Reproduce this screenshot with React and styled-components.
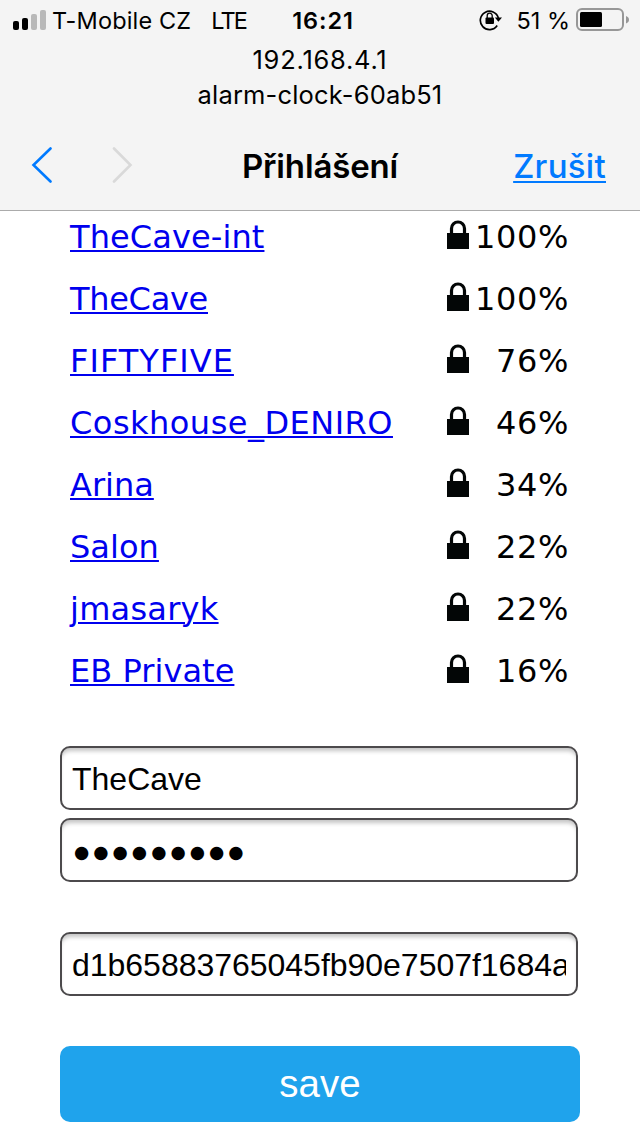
import React from 'react';
import styled, { createGlobalStyle } from 'styled-components';

const GlobalStyle = createGlobalStyle`
  *, *::before, *::after { box-sizing: border-box; }
  body { margin: 0; background: #fff; color: #000; }
`;

const Screen = styled.div`
  width: 640px;
  height: 1136px;
  overflow: hidden;
  background: #fff;
`;

const Header = styled.header`
  height: 211px;
  background: #f4f4f4;
  border-bottom: 1px solid #ababab;
  font-family: Inter, sans-serif;
`;

const StatusBar = styled.div`
  height: 42px;
  display: grid;
  grid-template-columns: 1fr auto 1fr;
  align-items: center;
  padding: 0 10px 0 13px;
  font-size: 23.5px;
  line-height: 40px;
  white-space: pre;
`;

const StatusGroup = styled.div`
  display: flex;
  align-items: center;
  justify-content: ${(p) => p.$end ? 'flex-end' : 'flex-start'};

  svg { margin-bottom: 2px; }
`;

const Text = styled.span`
  letter-spacing: ${(p) => p.$spacing || 0}px;
  margin-left: ${(p) => p.$left || 0}px;
`;

const Clock = styled.time`
  padding-left: 3px;
  font-weight: 600;
  letter-spacing: 0.9px;
`;

const Network = styled.div`
  text-align: center;
  font-size: 25.5px;
  line-height: 35px;
  letter-spacing: ${(p) => p.$spacing}px;
`;

const NavBar = styled.nav`
  height: 98px;
  display: grid;
  grid-template-columns: 1fr auto 1fr;
  align-items: center;
  padding: 8px 34px 0 30px;
`;

const Arrows = styled.div`
  display: flex;
  gap: 56px;
`;

const Title = styled.h1`
  margin: 0;
  padding: 2px 0 0 4px;
  font-size: 33px;
  font-weight: 600;
  line-height: 40px;
  letter-spacing: -0.15px;
`;

const Cancel = styled.a`
  justify-self: end;
  padding-top: 2px;
  font-size: 33px;
  font-weight: 500;
  line-height: 40px;
  letter-spacing: 0.3px;
  color: #007aff;
  text-decoration: underline;
  text-decoration-thickness: 2px;
  text-underline-offset: 3px;
`;

const List = styled.ul`
  display: flex;
  flex-direction: column;
  gap: 10px;
  margin: 0;
  padding: 0 71px 0 70px;
  list-style: none;
  font-family: Verdana, "DejaVu Sans", sans-serif;
  font-size: 32px;
`;

const Row = styled.li`
  display: flex;
  align-items: center;
  height: 52px;
  line-height: 52px;
`;

const Ssid = styled.a`
  color: #0000ee;
  letter-spacing: ${(p) => p.$spacing}px;
  text-decoration: underline;
  text-decoration-thickness: 2px;
  text-underline-offset: 2px;
`;

const Signal = styled.div`
  margin-left: auto;
  width: 123px;
  display: flex;
  align-items: center;
  justify-content: space-between;
  letter-spacing: 0.6px;

  svg { margin-bottom: 4px; }
`;

const Form = styled.form`
  display: flex;
  flex-direction: column;
  padding: 49px 60px 0;
`;

const Field = styled.div`
  width: 518px;
  height: 64px;
  margin-bottom: ${(p) => p.$after}px;
  padding: 0 10px;
  border: 2px solid #4c4a4c;
  border-radius: 10px;
  box-shadow: inset 0 5px 4px -2px #c4c4c4;
  font-family: "Liberation Sans", Arial, sans-serif;
  font-size: 32px;
  line-height: 62px;
`;

const Value = styled.div`
  overflow: hidden;
  white-space: nowrap;
  letter-spacing: ${(p) => p.$spacing || 0}px;
`;

const Dots = styled(Value)`
  padding: 1px 0 0 2px;
  font-family: "DejaVu Sans", sans-serif;
  font-size: 17.5px;
`;

const Save = styled.button`
  width: 520px;
  height: 76px;
  padding: 0;
  border: 0;
  border-radius: 10px;
  background: #1fa3ec;
  color: #fff;
  font: 38.4px/76px "Liberation Sans", Arial, sans-serif;
  letter-spacing: 0.1px;
`;

const networks = [
  { name: 'TheCave-int', quality: '100%', spacing: 0.1 },
  { name: 'TheCave', quality: '100%', spacing: -0.3 },
  { name: 'FIFTYFIVE', quality: '76%', spacing: 1.02 },
  { name: 'Coskhouse_DENIRO', quality: '46%', spacing: 0.48 },
  { name: 'Arina', quality: '34%', spacing: 0 },
  { name: 'Salon', quality: '22%', spacing: 0.05 },
  { name: 'jmasaryk', quality: '22%', spacing: 0.25 },
  { name: 'EB Private', quality: '16%', spacing: 0.05 },
];

const SignalBars = () => (
  <svg width="34" height="20" viewBox="0 0 34 20">
    <rect x="0" y="11" width="6" height="9" rx="2" />
    <rect x="9" y="8" width="6" height="12" rx="2" />
    <rect x="18" y="4" width="6" height="16" rx="2" fill="#b9b9b9" />
    <rect x="27" y="0" width="6" height="20" rx="2" fill="#b9b9b9" />
  </svg>
);

const RotationLock = () => (
  <svg width="24" height="22" viewBox="0 0 24 22">
    <path d="M18.200 16.500A9.200 9.200 0 1 1 19.400 9" fill="none" stroke="#000" strokeWidth="1.700" />
    <path d="M15.800 8.500h7.200l-3.600 4.200z" />
    <rect x="6.500" y="8.500" width="8.500" height="6.500" rx="1" />
    <path d="M8.200 9V6.700a2.500 2.500 0 0 1 5 0V9" fill="none" stroke="#000" strokeWidth="1.300" />
  </svg>
);

const Battery = () => (
  <svg width="54" height="24" viewBox="0 0 54 24">
    <rect x="1" y="1" width="46" height="21" rx="5" fill="none" stroke="#979797" strokeWidth="2" />
    <rect x="4" y="4" width="22" height="15" rx="1.500" />
    <path d="M50 8c2 .8 3 2 3 3.700s-1 2.900-3 3.700z" fill="#979797" />
  </svg>
);

const Chevron = ({ forward }) => (
  <svg width="24" height="36" viewBox="0 0 24 36">
    <path
      d={forward ? 'M4 1.500L20.500 18 4 34.500' : 'M20.500 1.500L3.500 18l17 16.500'}
      fill="none"
      stroke={forward ? '#d9d9d9' : '#007aff'}
      strokeWidth="2.600"
      strokeLinecap="round"
      strokeLinejoin="miter"
    />
  </svg>
);

const Padlock = () => (
  <svg width="24" height="30" viewBox="0 0 24 30">
    <path d="M5.500 14V8.500a6.500 6.500 0 0 1 13 0V14" fill="none" stroke="#030606" strokeWidth="3.200" />
    <rect x="1" y="13" width="22" height="16" fill="#030606" />
  </svg>
);

export default function App() {
  return (
    <Screen>
      <GlobalStyle />
      <Header>
        <StatusBar>
          <StatusGroup>
            <SignalBars />
            <Text $left={5} $spacing={0.15}>T-Mobile CZ</Text>
            <Text $left={20} $spacing={-1.8}>LTE</Text>
          </StatusGroup>
          <Clock>16:21</Clock>
          <StatusGroup $end>
            <RotationLock />
            <Text $left={13}>51 %</Text>
            <Text $left={6} />
            <Battery />
          </StatusGroup>
        </StatusBar>
        <Network $spacing={0.75}>192.168.4.1</Network>
        <Network $spacing={0.17}>alarm-clock-60ab51</Network>
        <NavBar>
          <Arrows>
            <Chevron />
            <Chevron forward />
          </Arrows>
          <Title>Přihlášení</Title>
          <Cancel>Zrušit</Cancel>
        </NavBar>
      </Header>
      <List>
        {networks.map((n) => (
          <Row key={n.name}>
            <Ssid $spacing={n.spacing}>{n.name}</Ssid>
            <Signal>
              <Padlock />
              <span>{n.quality}</span>
            </Signal>
          </Row>
        ))}
      </List>
      <Form>
        <Field $after={8}><Value>TheCave</Value></Field>
        <Field $after={50}><Dots $spacing={4.02}>●●●●●●●●●</Dots></Field>
        <Field $after={50}><Value $spacing={-0.02}>d1b65883765045fb90e7507f1684a9</Value></Field>
        <Save type="button">save</Save>
      </Form>
    </Screen>
  );
}
